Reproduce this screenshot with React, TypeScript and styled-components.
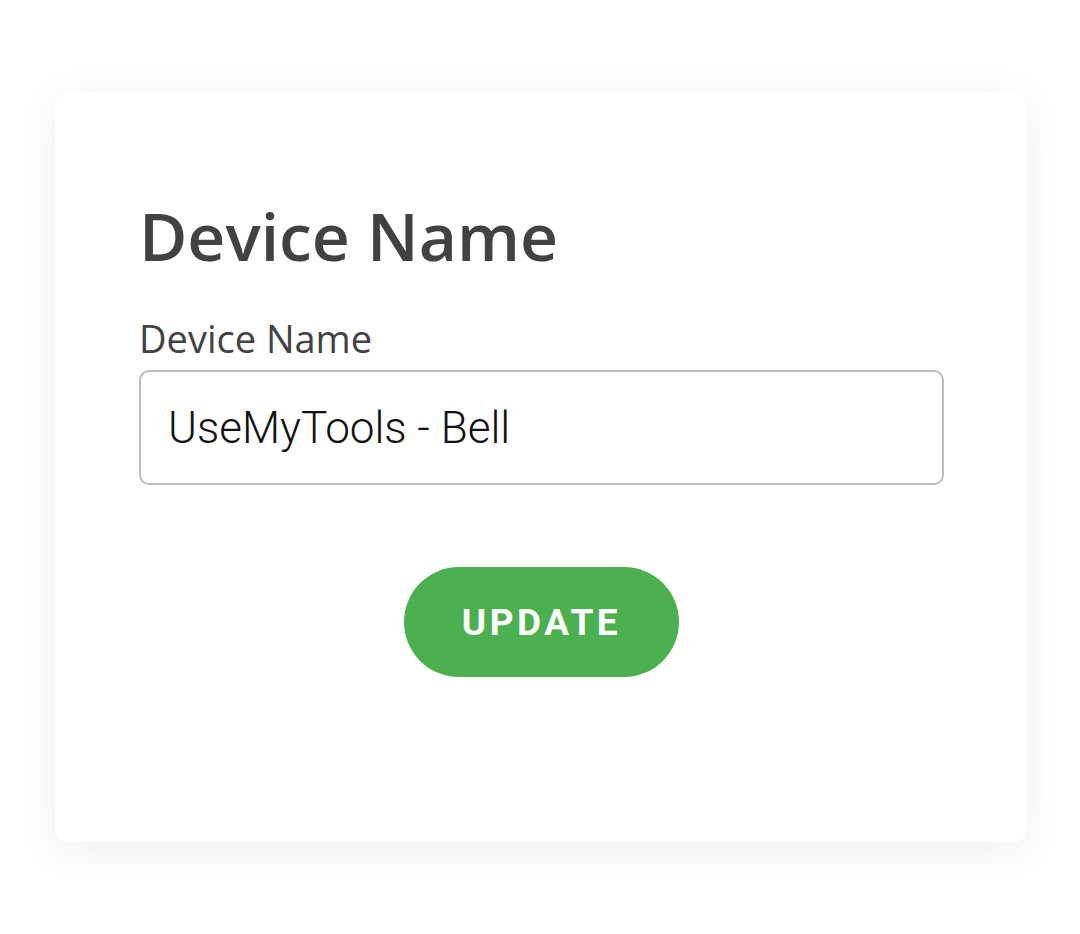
import React from "react";
import styled, { createGlobalStyle } from "styled-components";

const Global = createGlobalStyle`
  html, body { margin: 0; padding: 0; background: #ffffff; }
  * { box-sizing: border-box; }
`;

const Page = styled.div`
  width: 1080px;
  height: 934px;
  padding: 92px 54px 0 55px;
`;

const Card = styled.div`
  width: 971px;
  height: 750px;
  background: #ffffff;
  border-radius: 12px;
  box-shadow: 0 8px 40px rgba(0, 0, 0, 0.07);
  padding: 98px 82px 0 84px;
  display: flex;
  flex-direction: column;
`;

const Title = styled.h1`
  margin: 0;
  font-family: "Open Sans", sans-serif;
  font-weight: 600;
  font-size: 66px;
  line-height: 90px;
  color: #424242;
`;

const Label = styled.label`
  margin-top: 34px;
  font-family: "Open Sans", sans-serif;
  font-weight: 400;
  font-size: 38px;
  line-height: 48px;
  color: #424242;
`;

const Input = styled.input`
  margin-top: 8px;
  width: 805px;
  height: 115px;
  border: 2px solid #bdbdbd;
  border-radius: 10px;
  padding: 0 27px;
  font-family: Roboto, sans-serif;
  font-weight: 300;
  font-size: 44px;
  color: #111111;
  background: #ffffff;
  outline: none;
`;

const ButtonRow = styled.div`
  margin-top: 82px;
  display: flex;
  justify-content: center;
  width: 805px;
`;

const Button = styled.button`
  width: 275px;
  height: 110px;
  border: none;
  border-radius: 55px;
  background: #4caf50;
  color: #ffffff;
  font-family: Roboto, sans-serif;
  font-weight: 700;
  font-size: 37px;
  letter-spacing: 3.5px;
  padding: 0;
  cursor: pointer;
`;

export default function App() {
  return (
    <>
      <Global />
      <Page>
        <Card>
          <Title>Device Name</Title>
          <Label>Device Name</Label>
          <Input defaultValue="UseMyTools - Bell" />
          <ButtonRow>
            <Button>UPDATE</Button>
          </ButtonRow>
        </Card>
      </Page>
    </>
  );
}
